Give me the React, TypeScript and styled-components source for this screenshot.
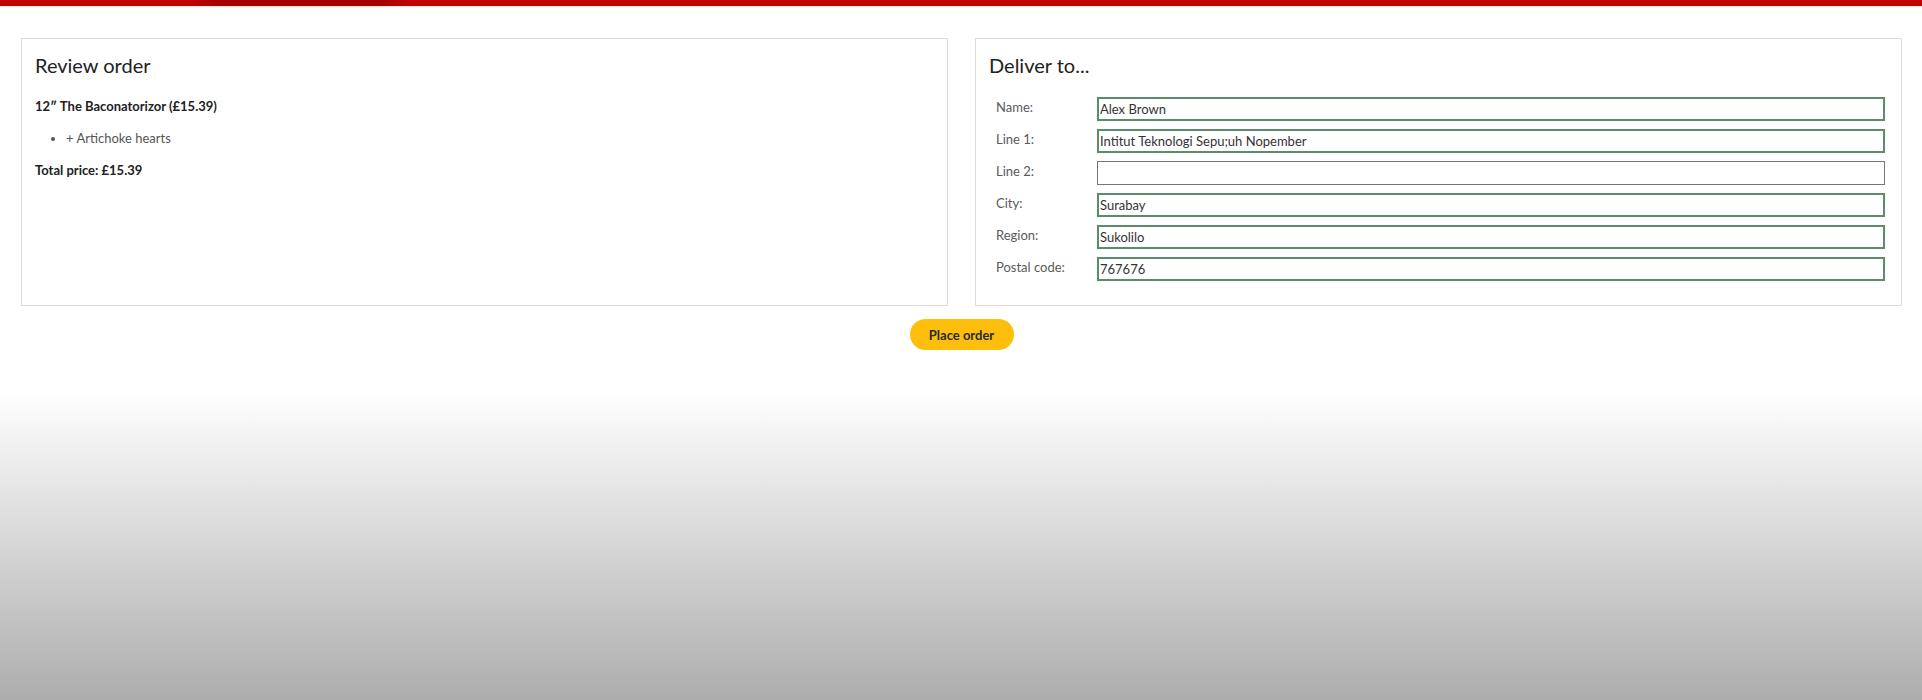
import { Fragment } from 'react';
import styled, { createGlobalStyle } from 'styled-components';

const GlobalStyle = createGlobalStyle`
  html, body {
    margin: 0;
    padding: 0;
  }
  body {
    min-height: 700px;
    font-family: Lato, "Open Sans", "Liberation Sans", sans-serif;
    color: #222;
    background: linear-gradient(to bottom, #ffffff 0px, #ffffff 392px, #adadad 700px);
    background-repeat: no-repeat;
  }
`;

export const TopBar = styled.div`
  display: flex;
  height: 6px;
  background-color: #c20000;
  box-shadow: 0 1px 2px rgba(0, 0, 0, 0.12);
`;
export const ActiveTab = styled.div`
  width: 214px;
  margin-left: 193px;
  background: linear-gradient(
    to right,
    rgba(0, 0, 0, 0.02),
    rgba(0, 0, 0, 0.13) 12%,
    rgba(0, 0, 0, 0.13) 88%,
    rgba(0, 0, 0, 0.02)
  );
`;
export const Main = styled.div`
  display: flex;
  flex-direction: column;
  align-items: center;
  padding: 32px 20px 0 21px;
`;
export const Columns = styled.div`
  display: grid;
  grid-template-columns: 1fr 1fr;
  gap: 27px;
  width: 100%;
  height: 268px;
`;
export const Panel = styled.div`
  border: 1px solid #dcdcdc;
  padding: 14px 13px;
  background-color: #fff;
`;
export const PanelTitle = styled.h2`
  margin: 0;
  font-size: 20px;
  line-height: 24px;
  font-weight: 400;
  color: #222;
`;
export const ItemTitle = styled.p`
  margin: 21px 0 0;
  font-size: 13px;
  line-height: 16px;
  font-weight: 700;
`;
export const ToppingList = styled.ul`
  margin: 16px 0 0;
  padding-left: 31px;
`;
export const Topping = styled.li`
  font-size: 13px;
  line-height: 16px;
  color: #555;
`;
export const TotalPrice = styled.p`
  margin: 16px 0 0;
  font-size: 13px;
  line-height: 16px;
  font-weight: 700;
`;
export const Form = styled.div`
  display: grid;
  grid-template-columns: 101px 1fr;
  row-gap: 8px;
  margin-top: 20px;
  padding: 0 3px 0 7px;
`;
export const Label = styled.label`
  font-size: 13px;
  line-height: 20px;
  color: #5a5a5a;
`;
export const Field = styled.input<{ $valid?: boolean }>`
  box-sizing: border-box;
  width: 100%;
  height: 24px;
  margin: 0;
  padding: 0 1px;
  font-family: inherit;
  font-size: 13px;
  color: #333;
  background: #fff;
  border: ${(props) => (props.$valid ? '2px solid #5a8d69' : '1px solid #767676')};
  outline: none;
  caret-color: #000;
`;
export const PlaceOrderButton = styled.button`
  margin-top: 13px;
  width: 104px;
  height: 31px;
  border: none;
  border-radius: 16px;
  background-color: #fdbe0c;
  color: #2a2a2a;
  font-family: inherit;
  font-size: 13px;
  font-weight: 700;
  cursor: pointer;
`;

const fields = [
  { label: 'Name:', value: 'Alex Brown' },
  { label: 'Line 1:', value: 'Intitut Teknologi Sepu;uh Nopember' },
  { label: 'Line 2:', value: '' },
  { label: 'City:', value: 'Surabay' },
  { label: 'Region:', value: 'Sukolilo' },
  { label: 'Postal code:', value: '767676' },
];

function App() {
  return (
    <>
      <GlobalStyle />
      <TopBar>
        <ActiveTab />
      </TopBar>
      <Main>
        <Columns>
          <Panel>
            <PanelTitle>Review order</PanelTitle>
            <ItemTitle>12″ The Baconatorizor (£15.39)</ItemTitle>
            <ToppingList>
              <Topping>+ Artichoke hearts</Topping>
            </ToppingList>
            <TotalPrice>Total price: £15.39</TotalPrice>
          </Panel>
          <Panel>
            <PanelTitle>Deliver to...</PanelTitle>
            <Form>
              {fields.map((f, i) => (
                <Fragment key={f.label}>
                  <Label htmlFor={'field' + i}>{f.label}</Label>
                  <Field
                    id={'field' + i}
                    $valid={f.value !== ''}
                    defaultValue={f.value}
                    autoFocus={i === fields.length - 1}
                  />
                </Fragment>
              ))}
            </Form>
          </Panel>
        </Columns>
        <PlaceOrderButton>Place order</PlaceOrderButton>
      </Main>
    </>
  );
}

export default App;
